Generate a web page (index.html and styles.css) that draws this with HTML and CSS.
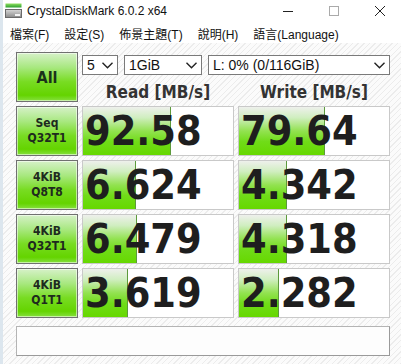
FILE: index.html
```html
<!DOCTYPE html>
<html>
<head lang="en">
    <meta charset="UTF-8">
    <title>CrystalDiskMark 6.0.2 x64</title>
    <link rel="stylesheet" href="styles.css">
</head>
<body>
<div class="window">
    <div class="titlebar">
        <svg class="appicon" width="17" height="15" viewBox="0 0 17 15">
            <defs>
                <linearGradient id="gbar" x1="0" y1="0" x2="0" y2="1">
                    <stop offset="0" stop-color="#8fe060"/>
                    <stop offset="1" stop-color="#2c9e30"/>
                </linearGradient>
                <linearGradient id="gbody" x1="0" y1="0" x2="0" y2="1">
                    <stop offset="0" stop-color="#d8d8d8"/>
                    <stop offset="1" stop-color="#8a8a8a"/>
                </linearGradient>
            </defs>
            <rect x="0.5" y="0.5" width="16" height="4" fill="url(#gbar)"/>
            <rect x="0.5" y="6.5" width="16" height="8" fill="url(#gbody)" stroke="#6a6a6a" stroke-width="1"/>
            <rect x="10" y="11" width="5" height="2" fill="#f4f4f4"/>
        </svg>
        <span class="title">CrystalDiskMark 6.0.2 x64</span>
        <div class="controls">
            <span class="ctl">
                <svg width="10" height="10" viewBox="0 0 10 10"><line x1="0" y1="5.5" x2="10" y2="5.5" stroke="#222" stroke-width="1"/></svg>
            </span>
            <span class="ctl">
                <svg width="10" height="10" viewBox="0 0 10 10"><rect x="0.5" y="0.5" width="9" height="9" fill="none" stroke="#aaa" stroke-width="1"/></svg>
            </span>
            <span class="ctl">
                <svg width="10" height="10" viewBox="0 0 10 10"><path d="M0 0 L10 10 M10 0 L0 10" stroke="#222" stroke-width="1"/></svg>
            </span>
        </div>
    </div>

    <div class="menubar">
        <span>檔案(F)</span>
        <span>設定(S)</span>
        <span>佈景主題(T)</span>
        <span>說明(H)</span>
        <span>語言(Language)</span>
    </div>

    <div class="main">
        <div class="top">
            <div class="btn all">All</div>
            <div class="setup">
                <div class="selects">
                    <div class="sel count">5 <svg class="chev" width="11" height="7" viewBox="0 0 11 7"><polyline points="0.5,0.8 5.5,5.8 10.5,0.8" fill="none" stroke="#222" stroke-width="1.4"/></svg></div>
                    <div class="sel size">1GiB <svg class="chev" width="11" height="7" viewBox="0 0 11 7"><polyline points="0.5,0.8 5.5,5.8 10.5,0.8" fill="none" stroke="#222" stroke-width="1.4"/></svg></div>
                    <div class="sel drive">L: 0% (0/116GiB) <svg class="chev" width="11" height="7" viewBox="0 0 11 7"><polyline points="0.5,0.8 5.5,5.8 10.5,0.8" fill="none" stroke="#222" stroke-width="1.4"/></svg></div>
                </div>
                <div class="heads">
                    <div class="head">Read [MB/s]</div>
                    <div class="head">Write [MB/s]</div>
                </div>
            </div>
        </div>

        <div class="row">
            <div class="btn label">Seq<br>Q32T1</div>
            <div class="val"><span class="fill" style="width: 88px"></span><span class="num">92.58</span></div>
            <div class="val"><span class="fill" style="width: 86px"></span><span class="num">79.64</span></div>
        </div>
        <div class="row">
            <div class="btn label">4KiB<br>Q8T8</div>
            <div class="val"><span class="fill" style="width: 53px"></span><span class="num">6.624</span></div>
            <div class="val"><span class="fill" style="width: 48px"></span><span class="num">4.342</span></div>
        </div>
        <div class="row">
            <div class="btn label">4KiB<br>Q32T1</div>
            <div class="val"><span class="fill" style="width: 54px"></span><span class="num">6.479</span></div>
            <div class="val"><span class="fill" style="width: 48px"></span><span class="num">4.318</span></div>
        </div>
        <div class="row">
            <div class="btn label">4KiB<br>Q1T1</div>
            <div class="val"><span class="fill" style="width: 45px"></span><span class="num">3.619</span></div>
            <div class="val"><span class="fill" style="width: 40px"></span><span class="num">2.282</span></div>
        </div>

        <div class="comment"></div>
    </div>
</div>
</body>
</html>
```

FILE: styles.css
```css
* {
    padding: 0;
    margin: 0;
    box-sizing: border-box;
}

html, body {
    width: 401px;
    height: 364px;
    overflow: hidden;
    background: #fff;
}

.window {
    height: 364px;
    border-left: 3px solid #dce6ee;
    box-shadow: inset 1px 0 #a8b8c6;
    font-family: "Liberation Sans", "Noto Sans CJK TC", sans-serif;
    color: #1a1a1a;
    display: flex;
    flex-direction: column;
}

/* title bar */
.titlebar {
    height: 24px;
    display: flex;
    align-items: center;
    padding-left: 2px;
    background: #fff;
}

.appicon {
    display: block;
    margin-top: -3px;
}

.title {
    margin-left: 5px;
    font-size: 12px;
    color: #111;
    margin-top: -2px;
}

.controls {
    margin-left: auto;
    margin-right: -2px;
    display: flex;
    align-self: stretch;
}

.ctl {
    width: 46px;
    display: flex;
    align-items: center;
    justify-content: center;
    margin-top: -2px;
}

.ctl svg {
    display: block;
}

/* menu */
.menubar {
    height: 19px;
    display: flex;
    align-items: center;
    gap: 15px;
    padding-left: 7px;
    font-size: 12px;
    color: #111;
    background: #fff;
}

/* main area */
.main {
    flex: 1;
    padding: 9px 0 0 13px;
    display: flex;
    flex-direction: column;
    gap: 4px;
    background-color: #f7f7f7;
    background-image: repeating-linear-gradient(135deg, #fbfbfb 0, #fbfbfb 3px, #ececec 3px, #ececec 4px);
}

.top {
    display: flex;
    gap: 4px;
    height: 50px;
}

.btn {
    width: 62px;
    height: 50px;
    border: 1px solid #707070;
    box-shadow: inset 0 0 0 1px rgba(255, 255, 255, 0.55);
    background: linear-gradient(#d6f1c8 0%, #a8e880 30%, #78dc22 60%, #64d400 88%, #86e040 100%);
    display: flex;
    align-items: center;
    justify-content: center;
    text-align: center;
    font-family: "DejaVu Sans Condensed", "DejaVu Sans", sans-serif;
    font-weight: bold;
    color: #1e2a1e;
}

.all {
    font-size: 16px;
    color: #1a321a;
}

.label {
    font-size: 12px;
    line-height: 15px;
}

.setup {
    width: 308px;
    display: flex;
    flex-direction: column;
}

.selects {
    display: flex;
    gap: 6px;
    padding-top: 3px;
}

.sel {
    height: 20px;
    border: 1px solid #7a7a7a;
    background: #fff;
    display: flex;
    align-items: center;
    justify-content: space-between;
    padding: 0 4px 0 4px;
    font-size: 14px;
    color: #111;
}

.chev {
    display: block;
}

.count {
    width: 36px;
}

.size {
    width: 78px;
}

.drive {
    width: 182px;
}

.heads {
    display: flex;
    gap: 4px;
    padding-top: 7px;
}

.head {
    width: 152px;
    text-align: center;
    font-family: "DejaVu Sans Condensed", "DejaVu Sans", sans-serif;
    font-weight: bold;
    font-size: 17px;
    line-height: 20px;
    color: #333;
}

/* result rows */
.row {
    display: flex;
    gap: 4px;
    height: 50px;
}

.val {
    width: 152px;
    height: 50px;
    border: 1px solid #c9c9c9;
    background: #fff;
    position: relative;
    padding-left: 2px;
}

.fill {
    position: absolute;
    left: 0;
    top: 0;
    bottom: 0;
    border-right: 1px solid #5c9a3c;
    background: linear-gradient(#eef0ec 0%, #d0eec0 22%, #92e250 50%, #70dc18 72%, #66d800 100%);
}

.num {
    position: relative;
    display: block;
    font-family: "DejaVu Sans Condensed", "DejaVu Sans", sans-serif;
    font-weight: bold;
    font-size: 41px;
    line-height: 48px;
    color: #1e1e1e;
}

.comment {
    margin-top: 4px;
    width: 374px;
    height: 30px;
    border: 1px solid #b4b4b4;
    border-right-color: #9a9a9a;
    border-bottom-color: #9a9a9a;
    background: #fdfdfd;
}
```
